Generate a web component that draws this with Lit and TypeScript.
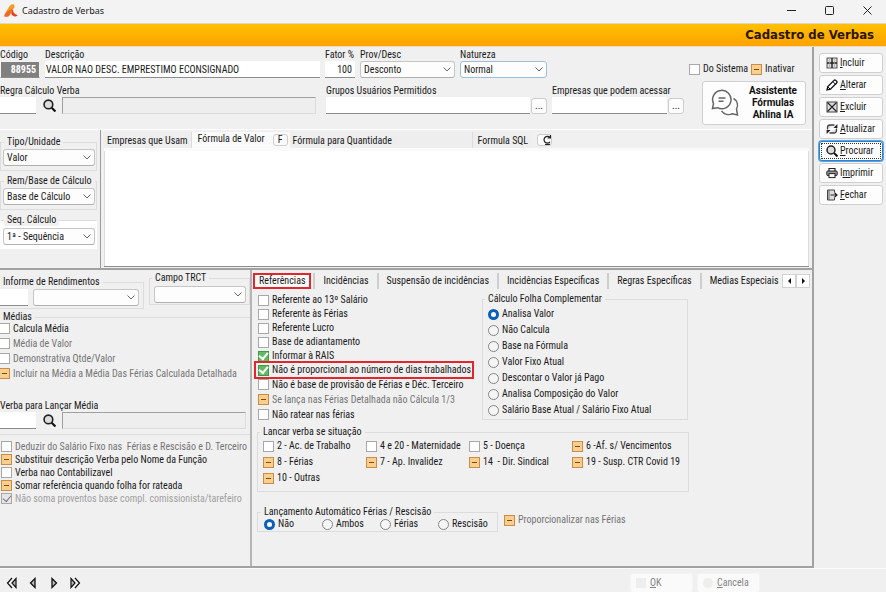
import { LitElement, html, svg, css, nothing, TemplateResult } from "lit";
import { customElement } from "lit/decorators.js";
import { classMap } from "lit/directives/class-map.js";

type Mark = "off" | "on" | "mixed" | "locked";
interface Check { text: string; mark: Mark; muted?: boolean; faded?: boolean; framed?: boolean }

const c = (text: string, mark: Mark = "off", extra: Partial<Check> = {}): Check => ({ text, mark, ...extra });

const MEDIAS: Check[] = [
  c("Calcula Média"),
  c("Média de Valor", "off", { muted: true }),
  c("Demonstrativa Qtde/Valor", "off", { muted: true }),
  c("Incluir na Média a Média Das Férias Calculada Detalhada", "mixed", { muted: true }),
];

const OPCOES: Check[] = [
  c("Deduzir do Salário Fixo nas  Férias e Rescisão e D. Terceiro", "off", { muted: true }),
  c("Substituir descrição Verba pelo Nome da Função", "mixed"),
  c("Verba nao Contabilizavel"),
  c("Somar referência quando folha for rateada", "mixed"),
  c("Não soma proventos base compl. comissionista/tarefeiro", "locked", { faded: true }),
];

const REFERENCIAS: Check[] = [
  c("Referente ao 13º Salário"),
  c("Referente às Férias"),
  c("Referente Lucro"),
  c("Base de adiantamento"),
  c("Informar à RAIS", "on"),
  c("Não é proporcional ao número de dias trabalhados", "on", { framed: true }),
];

const REFERENCIAS_FERIAS: Check[] = [
  c("Não é base de provisão de Férias e Déc. Terceiro"),
  c("Se lança nas Férias Detalhada não Cálcula 1/3", "mixed", { muted: true }),
  c("Não ratear nas férias"),
];

const SITUACOES: Check[] = [
  c("2 - Ac. de Trabalho"),
  c("4 e 20 - Maternidade"),
  c("5 - Doença"),
  c("6 -Af. s/ Vencimentos", "mixed"),
  c("8 - Férias", "mixed"),
  c("7 - Ap. Invalidez", "mixed"),
  c("14  - Dir. Sindical", "mixed"),
  c("19 - Susp. CTR Covid 19", "mixed"),
  c("10 - Outras", "mixed"),
];

const COMPLEMENTAR = [
  "Analisa Valor", "Não Calcula", "Base na Fórmula", "Valor Fixo Atual",
  "Descontar o Valor já Pago", "Analisa Composição do Valor",
  "Salário Base Atual / Salário Fixo Atual",
];
const AUTOMATICO = ["Não", "Ambos", "Férias", "Rescisão"];
const ABAS = [
  "Referências", "Incidências", "Suspensão de incidências",
  "Incidências Especificas", "Regras Específicas", "Medias Especiais",
];

const ICONS: Record<string, TemplateResult> = {
  incluir: svg`<rect x="1" y="1" width="10" height="10" fill="#ddd" stroke="#555"/><path d="M6 1v10M1 6h10" stroke="#222" stroke-width="1.4"/><path d="M3.5 1v10M8.5 1v10" stroke="#aaa" stroke-width=".6"/>`,
  alterar: svg`<path d="M1 11l.8-3.4L8 1.400a1.300 1.300 0 0 1 1.800 0l.8.8a1.300 1.300 0 0 1 0 1.800L4.400 10.200z" fill="#fff" stroke="#111" stroke-width="1.300"/><path d="M6.800 2.600l2.600 2.600M1.800 7.800l2.400 2.400" stroke="#111"/>`,
  excluir: svg`<rect x="1" y="1" width="10" height="10" fill="#ddd" stroke="#444"/><path d="M1.500 1.500l9 9M10.500 1.500l-9 9" stroke="#222" stroke-width="1.100"/>`,
  atualizar: svg`<path d="M1.500 6.500v-2a2.500 2.500 0 0 1 2.500-2.500h4.500M10.500 5.500v2a2.500 2.500 0 0 1-2.500 2.500H3.500" fill="#ddd" stroke="#444" stroke-width="1.300"/><path d="M11.400 1v4H7.400zM.6 11V7h4z" fill="#222"/>`,
  procurar: svg`<circle cx="5" cy="5" r="4" fill="#ddd" stroke="#222" stroke-width="1.500"/><path d="M8 8l3.500 3.500" stroke="#111" stroke-width="2"/>`,
  imprimir: svg`<path d="M3 4V1.500h6V4" fill="#fff" stroke="#222" stroke-width="1.200"/><rect x=".8" y="4" width="10.400" height="4.600" rx="1" fill="#999" stroke="#222"/><rect x="3" y="6.600" width="6" height="4" fill="#fff" stroke="#222"/>`,
  fechar: svg`<path d="M8.500 3.500V1h-7v10h7V8.500" fill="#ddd" stroke="#444"/><path d="M3 1v10" stroke="#666"/><path d="M4.500 6h6M8.500 3.800L11 6 8.500 8.200" fill="none" stroke="#222" stroke-width="1.200"/>`,
};

const ACOES: [string, string, string, string][] = [
  ["incluir", "", "I", "ncluir"], ["alterar", "", "A", "lterar"], ["excluir", "", "E", "xcluir"],
  ["atualizar", "", "A", "tualizar"], ["procurar", "", "P", "rocurar"],
  ["imprimir", "I", "m", "primir"], ["fechar", "", "F", "echar"],
];

@customElement("app-root")
export class AppRoot extends LitElement {
  static styles = css`
    :host {
      display: flex; flex-direction: column; min-height: 100vh;
      background: #f0f0f0; color: #1a1a1a;
      font: 10px/12px "Roboto Condensed", "Liberation Sans Narrow", Roboto, sans-serif;
    }
    * { box-sizing: border-box; }
    button, input, select, textarea { font: inherit; color: inherit; margin: 0; }
    fieldset { border: 1px solid #dcdcdc; margin: 0; padding: 0; min-width: 0; }
    legend { padding: 0 3px; margin-left: 3px; line-height: 12px; }
    svg { display: block; }
    u { text-underline-offset: 1px; }

    .title { display: flex; align-items: center; height: 23px; padding: 0 0 2px 4px; background: #f3f3f3; font-family: "Noto Sans", sans-serif; }
    .title .name { flex: 1; font-size: 9px; padding-left: 4px; }
    .win { border: 0; background: none; padding: 0; width: 38px; display: grid; place-items: center; }
    .banner { height: 24px; background: linear-gradient(#ffc000, #ffa200); border-top: 1px solid #e0d8c4; border-bottom: 1px solid #ecdcc0; display: flex; justify-content: flex-end; align-items: center; padding-right: 12px; }
    .banner h1 { margin: 0; font: bold 13px/20px "DejaVu Sans Condensed", "DejaVu Sans", sans-serif; color: #2a1500; }

    .main { flex: 1; display: flex; }
    .work { flex: 1; min-width: 0; display: flex; flex-direction: column; border-right: 2px solid #a2a2a2; }
    .actions { width: 72px; padding: 6px 3px 0 5px; display: flex; flex-direction: column; gap: 2px; }
    .act { height: 20px; display: flex; align-items: center; gap: 2px; padding: 0 6px; background: #fdfdfd; border: 1px solid #cfcfcf; border-radius: 3px; white-space: nowrap; }
    .act svg { width: 12px; height: 12px; flex: none; }
    .act.focus { border: 1px solid #2a84d2; outline: 1px dotted #333; outline-offset: -3px; box-shadow: 0 0 0 1px #5ea5e0; }

    .head { display: flex; height: 83px; padding-right: 6px; border-bottom: 1px solid #fff; }
    .fields { flex: 1; display: flex; flex-direction: column; gap: 7px; padding-top: 2px; min-width: 0; }
    .row { display: flex; gap: 5px; align-items: flex-end; }
    .f { display: flex; flex-direction: column; min-width: 0; }
    .grow { flex: 1; }
    .io { display: flex; align-items: center; gap: 1px; }
    .find { gap: 6px; }
    .find .zoomer { margin: 0 0 0 1px; border: 0; padding: 0; background: none; width: 13px; height: 13px; }
    .txt { height: 17px; width: 100%; min-width: 0; border: 0; border-bottom: 1px solid #8c8c8c; background: #fff; padding: 0 1px; border-radius: 0; }
    .txt.num { text-align: right; padding-right: 3px; }
    .txt.key { background: #808080; color: #fff; font-weight: bold; border: 1px solid #f4f4f4; border-bottom-color: #8c8c8c; }
    .txt.ro { background: #eee; border: 1px solid #dcdcdc; border-top-color: #a0a0a0; border-left-color: #a0a0a0; }
    .short { width: 36px; flex: none; }
    .code { width: 40px; } .fator { width: 30px; } .prov { width: 95px; } .nat { width: 87px; }
    .grupos { width: 221px; } .emps { width: 132px; }
    .dots { width: 16px; height: 16px; flex: none; border: 1px solid #ccc; border-radius: 3px; background: #fcfcfc; padding: 0; line-height: 10px; }
    .pick { display: grid; align-items: center; }
    .pick select { grid-area: 1 / 1; appearance: none; width: 100%; height: 17px; border: 1px solid #c6c6c6; border-bottom-color: #b0b0b0; border-radius: 3px; background: #fdfdfd; padding: 0 14px 0 3px; }
    .nat .pick select { border-color: #9dbfdd; }
    .pick svg { grid-area: 1 / 1; justify-self: end; margin-right: 4px; pointer-events: none; }
    .side { width: 122px; padding: 16px 0 0 5px; display: flex; flex-direction: column; align-items: flex-end; gap: 6px; flex: none; }
    .side .flags { display: flex; gap: 3px; width: 100%; }
    .ia { width: 104px; height: 44px; border: 1px solid #d0d0d0; border-radius: 3px; background: #fdfdfd; padding: 0 8px; display: flex; align-items: center; justify-content: space-between; font: bold 10px/12px Roboto, sans-serif; color: #111; }

    .chk { display: flex; align-items: center; gap: 3px; white-space: pre; min-width: 0; }
    .chk input { appearance: none; width: 11px; height: 11px; flex: none; background: #fff; border: 1px solid #a8a8a8; display: grid; place-items: center; }
    .chk.mixed input { background: #f7d08f; border-color: #cf8a45; }
    .chk.mixed input::before { content: ""; width: 5px; height: 1px; background: #8a4508; }
    .chk.on input { background: #62bb62; border-color: #3d9a45; }
    .chk.on input::before, .chk.locked input::before { content: ""; width: 7px; height: 4px; border: solid #fff; border-width: 0 0 2px 2px; transform: rotate(-50deg); margin-bottom: 2px; }
    .chk.locked input { background: #e6e6e6; }
    .chk.locked input::before { border-color: #777; border-width: 0 0 1px 1px; }
    .chk.muted { color: #757575; }
    .chk.faded { color: #a0a0a0; }
    .chk.framed { outline: 2px solid #e3262c; width: 216px; margin-left: -2px; padding-left: 2px; }
    .rad { display: flex; align-items: center; gap: 3px; white-space: nowrap; }
    .rad input { appearance: none; width: 11px; height: 11px; border-radius: 50%; border: 1px solid #858585; background: #f6f6f6; flex: none; }
    .rad input:checked { border: 3px solid #0a5fb8; background: #fff; }

    .mid { display: flex; height: 140px; border-bottom: 2px solid #a2a2a2; }
    .types { width: 101px; flex: none; border-right: 1px solid #9a9a9a; padding: 6px 3px 0 0; display: flex; flex-direction: column; gap: 4px; }
    .types fieldset { padding: 1px 1px 4px 2px; }
    .types .lit { background: #fff; border-color: #fff; border-top-color: #dcdcdc; padding: 2px 1px 3px 2px; }
    .types legend { margin-left: 1px; }
    .types .lit legend { background: #f0f0f0; }
    .formula { flex: 1; display: flex; flex-direction: column; padding: 2px 3px 1px 3px; }
    .ftabs { display: flex; align-items: stretch; height: 16px; }
    .ftab { display: flex; align-items: center; border: 0; border-right: 1px solid #dcdcdc; background: #eee; padding: 2px 3px 0 3px; white-space: nowrap; }
    .ftab.cur { background: #fafafa; border: 0; padding: 0 8px 2px 6px; }
    .ftab.qty { width: 183px; }
    .ftab.sql { border-right: 0; padding-left: 5px; }
    .mini { border: 1px solid #ccc; border-radius: 3px; background: #fcfcfc; width: 15px; height: 12px; padding: 0; line-height: 10px; align-self: center; }
    .mini.end { display: grid; place-items: center end; margin-left: 6px; }
    .curbox { display: flex; background: #fafafa; padding-right: 2px; }
    .area { flex: 1; resize: none; border: 0 solid #fafafa; border-top-width: 3px; background: #fff; box-shadow: inset 0 -1px 0 #8c8c8c, inset 1px 0 0 #dcdcdc, inset -1px 0 0 #dcdcdc; width: 100%; }

    .low { flex: 1; display: flex; border-bottom: 2px solid #a2a2a2; }
    .left { width: 252px; flex: none; border-right: 2px solid #b4b4b4; padding-top: 2px; }
    .pair { display: flex; justify-content: space-between; }
    .pair .inf { width: 144px; margin-top: 4px; border-left: 0; padding: 1px 4px 1px 0; display: flex; gap: 5px; height: 33px; }
    .pair .inf legend { margin-left: 0; }
    .pair .inf .txt { width: 28px; }
    .pair .trct { width: 101px; height: 33px; padding: 2px 3px 1px 4px; }
    .pair .trct legend { margin-left: -2px; }
    .med { border-width: 1px 0; margin-top: 2px; padding-bottom: 5px; }
    .med legend { margin-left: 0; }
    .stack { display: grid; grid-auto-rows: 15px; justify-content: start; }
    .tight { grid-auto-rows: 13px; padding: 5px 0 0 1px; }
    .med .stack { margin: -2px 0 0 -1px; }
    .verba { margin: 19px 4px 0 0; }
    .right { flex: 1; min-width: 0; }
    .tabs { display: flex; height: 20px; align-items: center; padding: 1px 2px 0 1px; }
    .tab { border: 0; border-right: 2px solid #cdcdcd; background: none; height: 16px; padding: 0 8px; white-space: nowrap; flex: none; }
    .tab.cur { outline: 2px solid #e3262c; outline-offset: -2px; background: #fafafa; padding: 0 6px; border: 0; margin-right: 2px; }
    .tab.second { border-left: 2px solid #cdcdcd; }
    .tab:last-of-type { border: 0; padding-right: 0; }
    .arrows { margin-left: auto; display: flex; }
    .arrows button { width: 14px; height: 14px; border: 1px solid #d2d2d2; background: #fff; padding: 0; display: grid; place-items: center; }
    .panel { padding: 3px 6px 0 5px; display: flex; flex-direction: column; align-items: flex-start; }
    .cols { display: flex; gap: 8px; align-items: flex-start; }
    .refs { width: 217px; padding-left: 1px; flex: none; }
    .refs .stack { grid-auto-rows: 14px; }
    .refs .more { grid-auto-rows: 15px; }
    .comp { width: 206px; height: 127px; padding: 1px 0 0 5px; }
    .comp legend, .sit legend, .auto legend { margin-left: -3px; }
    .comp .stack { grid-auto-rows: 16px; }
    .sit { width: 432px; height: 66px; margin-top: 4px; padding: 0 0 0 5px; display: grid; grid-template-columns: repeat(4, 103px); grid-auto-rows: 16px; }
    .last { display: flex; gap: 6px; margin-top: 14px; }
    .auto { width: 241px; height: 26px; padding: 0 0 0 6px; }
    .auto .line { display: grid; grid-template-columns: repeat(4, 58px); }
    .last .chk { height: 14px; margin-top: 7px; }

    .foot { height: 24px; display: flex; align-items: flex-start; justify-content: space-between; padding: 4px 126px 0 6px; overflow: hidden; border-top: 1px solid #fafafa; }
    .nav { display: flex; gap: 9px; padding-top: 4px; }
    .nav button { border: 0; background: none; padding: 0; width: 12px; height: 12px; }
    .ends { display: flex; gap: 4px; }
    .ends button { width: 63px; height: 20px; border: 1px solid #f4f4f4; background: #fafafa; border-radius: 3px; color: #858585; display: flex; align-items: center; gap: 4px; padding: 0 5px; }
    .ends i { width: 10px; height: 10px; background: #eee; }
    .ends i.round { border-radius: 50%; }
  `;

  private check(k: Check) {
    return html`<label class=${classMap({ chk: true, [k.mark]: true, muted: !!k.muted, faded: !!k.faded, framed: !!k.framed })}>
      <input type="checkbox" ?checked=${k.mark === "on" || k.mark === "locked"} ?disabled=${!!k.muted || !!k.faded}
        .indeterminate=${k.mark === "mixed"}><span>${k.text}</span></label>`;
  }

  private radios(name: string, items: string[]) {
    return items.map((t, i) => html`<label class="rad"><input type="radio" name=${name} ?checked=${i === 0}><span>${t}</span></label>`);
  }

  private pick(value: string, label: string, id = "") {
    return html`<span class="pick"><select id=${id || nothing} aria-label=${label}><option>${value}</option></select>
      <svg width="8" height="5" viewBox="0 0 8 5"><path d="M.5.5L4 4 7.500.5" fill="none" stroke="#666"/></svg></span>`;
  }

  private lens(label: string) {
    return html`<button class="zoomer" aria-label=${label}><svg width="13" height="13" viewBox="0 0 12 12">${ICONS.procurar}</svg></button>`;
  }

  render() {
    return html`
      <header class="title">
        <svg width="14" height="14" viewBox="0 0 14 14"><path d="M1 9.500C3 7.500 4.500 2 7.500.6c2-.8 3.300.4 3 2.400C10 5.500 5 7 1 9.500z" fill="#f59a23"/><path d="M.3 12.500C0 9.500 3 7 9 4.500L6.500 10c-1 2.500-4 3.500-6.200 2.500z" fill="#ef6a24"/><path d="M9 5.500c-.2 3 1.500 4.500 4.500 5.500-.5 1.800-3.500 2-5 .5C6.500 9.800 7.300 7 9 5.500z" fill="#e8401c"/></svg>
        <span class="name">Cadastro de Verbas</span>
        <button class="win" aria-label="Minimizar"><svg width="9" height="9"><path d="M0 4.500h9" stroke="#222"/></svg></button>
        <button class="win" aria-label="Maximizar"><svg width="9" height="9"><rect x=".5" y=".5" width="8" height="8" rx="1" fill="none" stroke="#222"/></svg></button>
        <button class="win" aria-label="Fechar janela"><svg width="9" height="9"><path d="M.5.5l8 8M8.500.5l-8 8" stroke="#222"/></svg></button>
      </header>
      <div class="banner"><h1>Cadastro de Verbas</h1></div>

      <div class="main">
        <div class="work">
          <section class="head">
            <div class="fields">
              <div class="row">
                <div class="row grow">
                  <div class="f code"><label for="cod">Código</label><input class="txt key num" id="cod" value="88955"></div>
                  <div class="f grow"><label for="desc">Descrição</label><input class="txt" id="desc" value="VALOR NAO DESC. EMPRESTIMO ECONSIGNADO"></div>
                </div>
                <div class="f fator"><label for="fat">Fator %</label><input class="txt num" id="fat" value="100"></div>
                <div class="f prov"><label for="prov">Prov/Desc</label>${this.pick("Desconto", "Prov/Desc", "prov")}</div>
                <div class="f nat"><label for="nat">Natureza</label>${this.pick("Normal", "Natureza", "nat")}</div>
                <div class="f emps"></div>
              </div>
              <div class="row">
                <div class="f grow"><label for="regra">Regra Cálculo Verba</label>
                  <div class="io find"><input class="txt short" id="regra">${this.lens("Procurar regra")}<input class="txt ro" readonly aria-label="Regra"></div></div>
                <div class="f"></div>
                <div class="f grupos"><label for="gru">Grupos Usuários Permitidos</label>
                  <div class="io"><input class="txt" id="gru"><button class="dots" aria-label="Escolher grupos">...</button></div></div>
                <div class="f emps"><label for="emp">Empresas que podem acessar</label>
                  <div class="io"><input class="txt" id="emp"><button class="dots" aria-label="Escolher empresas">...</button></div></div>
              </div>
            </div>
            <div class="side">
              <div class="flags">${this.check(c("Do Sistema"))}${this.check(c("Inativar", "mixed"))}</div>
              <button class="ia">
                <svg width="28" height="28" viewBox="0 0 28 28" fill="none" stroke="#666" stroke-width="1.500"><path d="M1.500 19.500l1-5A9.200 9.200 0 1 1 6.500 18.700z"/><path d="M7.500 9h7M7.500 12.200h5"/><path d="M22.500 9.500c4 2.300 5 6.500 3 10.500l1 6-5-1.200c-4 1.700-8.500.4-11-2.800"/></svg>
                <span>Assistente<br>Fórmulas<br>Ahlina IA</span></button>
            </div>
          </section>

          <section class="mid">
            <div class="types">
              <fieldset><legend>Tipo/Unidade</legend>${this.pick("Valor", "Tipo/Unidade")}</fieldset>
              <fieldset><legend>Rem/Base de Cálculo</legend>${this.pick("Base de Cálculo", "Rem/Base de Cálculo")}</fieldset>
              <fieldset class="lit"><legend>Seq. Cálculo</legend>${this.pick("1ª - Sequência", "Seq. Cálculo")}</fieldset>
            </div>
            <div class="formula">
              <div class="ftabs">
                <button class="ftab">Empresas que Usam</button>
                <div class="curbox"><button class="ftab cur">Fórmula de Valor</button><button class="mini">F</button></div>
                <button class="ftab qty">Fórmula para Quantidade</button>
                <button class="ftab sql">Formula SQL</button>
                <button class="mini end" aria-label="Recarregar"><svg width="9" height="10" viewBox="0 0 9 10"><path d="M8 2.500A3.400 3.400 0 1 0 8 7M8.500 0v3H5.500M3 9.500h5" fill="none" stroke="#222" stroke-width="1.200"/></svg></button>
              </div>
              <textarea class="area" aria-label="Fórmula de Valor"></textarea>
            </div>
          </section>

          <section class="low">
            <div class="left">
              <div class="pair">
                <fieldset class="inf"><legend>Informe de Rendimentos</legend><input class="txt" aria-label="Código do informe"><div class="grow">${this.pick("", "Informe de Rendimentos")}</div></fieldset>
                <fieldset class="trct"><legend>Campo TRCT</legend>${this.pick("", "Campo TRCT")}</fieldset>
              </div>
              <fieldset class="med"><legend>Médias</legend>
                <div class="stack">${MEDIAS.map((k) => this.check(k))}</div>
                <div class="f verba"><label for="verba">Verba para Lançar Média</label>
                  <div class="io find"><input class="txt short" id="verba">${this.lens("Procurar verba")}<input class="txt ro" readonly aria-label="Verba"></div></div>
              </fieldset>
              <div class="stack tight">${OPCOES.map((k) => this.check(k))}</div>
            </div>
            <div class="right">
              <nav class="tabs">
                ${ABAS.map((t, i) => html`<button class=${classMap({ tab: true, cur: i === 0, second: i === 1 })}>${t}</button>`)}
                <div class="arrows">
                  <button aria-label="Anterior"><svg width="3" height="6"><path d="M3 0v6L0 3z" fill="#111"/></svg></button>
                  <button aria-label="Próxima"><svg width="3" height="6"><path d="M0 0v6l3-3z" fill="#111"/></svg></button>
                </div>
              </nav>
              <div class="panel">
                <div class="cols">
                  <div class="refs">
                    <div class="stack">${REFERENCIAS.map((k) => this.check(k))}</div>
                    <div class="stack more">${REFERENCIAS_FERIAS.map((k) => this.check(k))}</div>
                  </div>
                  <fieldset class="comp"><legend>Cálculo Folha Complementar</legend>
                    <div class="stack">${this.radios("comp", COMPLEMENTAR)}</div></fieldset>
                </div>
                <fieldset class="sit"><legend>Lancar verba se situação</legend>${SITUACOES.map((k) => this.check(k))}</fieldset>
                <div class="last">
                  <fieldset class="auto"><legend>Lançamento Automático Férias / Rescisão</legend>
                    <div class="line">${this.radios("auto", AUTOMATICO)}</div></fieldset>
                  ${this.check(c("Proporcionalizar nas Férias", "mixed", { muted: true }))}
                </div>
              </div>
            </div>
          </section>
        </div>

        <aside class="actions">
          ${ACOES.map(([id, a, u, b]) => html`<button class=${classMap({ act: true, focus: id === "procurar" })}>
            <svg viewBox="0 0 12 12">${ICONS[id]}</svg><span>${a}<u>${u}</u>${b}</span></button>`)}
        </aside>
      </div>

      <footer class="foot">
        <div class="nav">
          <button aria-label="Primeiro"><svg width="12" height="12" fill="#bbb" stroke="#111" stroke-width="1.200"><path d="M6 1L1.500 6 6 11" fill="none"/><path d="M10 1.500v9L6 6z"/></svg></button>
          <button aria-label="Anterior"><svg width="12" height="12" fill="#bbb" stroke="#111" stroke-width="1.300"><path d="M8 1.500v9L3.500 6z"/></svg></button>
          <button aria-label="Próximo"><svg width="12" height="12" fill="#bbb" stroke="#111" stroke-width="1.300"><path d="M4 1.500v9L8.500 6z"/></svg></button>
          <button aria-label="Último"><svg width="12" height="12" fill="#bbb" stroke="#111" stroke-width="1.200"><path d="M6 1l4.500 5L6 11" fill="none"/><path d="M2 1.500v9L6 6z"/></svg></button>
        </div>
        <div class="ends">
          <button disabled><i></i><span><u>O</u>K</span></button>
          <button disabled><i class="round"></i><span><u>C</u>ancela</span></button>
        </div>
      </footer>`;
  }
}
